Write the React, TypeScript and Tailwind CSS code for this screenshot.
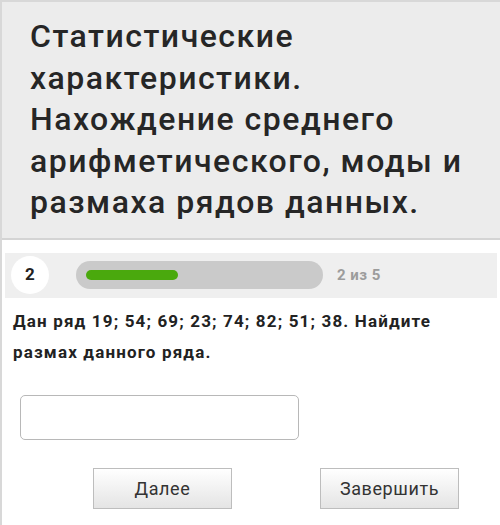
export default function App() {
  return (
    <div
      className="w-[500px] h-[525px] bg-white border-t-2 border-l-2 border-[#d8d8d8] overflow-hidden text-[#222]"
      style={{ fontFamily: 'Roboto, "Noto Sans", sans-serif' }}
    >
      {/* Title */}
      <div className="bg-[#ececec] border-b-2 border-[#d4d4d4] pl-[28px] pt-[14px] pb-[14px]">
        <h1 className="text-[32px] leading-[41.5px] font-medium tracking-[1.5px] text-[#262626]">
          Статистические
          <br />
          характеристики.
          <br />
          Нахождение среднего
          <br />
          арифметического, моды и
          <br />
          размаха рядов данных.
        </h1>
      </div>

      {/* Progress */}
      <div className="mt-[13px] ml-[3px] mr-[3px] h-[45px] bg-[#efefef] flex items-center">
        <div className="ml-[6px] w-[38px] h-[38px] rounded-full bg-white flex items-center justify-center text-[17px] font-bold">
          2
        </div>
        <div className="ml-[27px] w-[247px] h-[28px] rounded-full bg-[#cacaca] flex items-center pl-[10px]">
          <div className="w-[92px] h-[10px] rounded-full bg-[#4aa90d]" />
        </div>
        <span className="ml-[14px] text-[15px] font-bold tracking-[0.5px] text-[#9c9c9c]">2 из 5</span>
      </div>

      {/* Question */}
      <p className="mt-[8px] pl-[11px] pr-[40px] text-[17px] leading-[31px] font-bold tracking-[1.15px] text-[#222]">
        Дан ряд 19; 54; 69; 23; 74; 82; 51; 38. Найдите размах данного ряда.
      </p>

      <input
        type="text"
        className="block mt-[27px] ml-[18px] w-[279px] h-[45px] border border-[#b8b8b8] rounded-[5px] bg-white outline-none px-2"
      />

      <div className="mt-[28px] flex pl-[91px] gap-[88px]">
        <button className="w-[139px] h-[41px] border border-[#bdbdbd] bg-gradient-to-b from-white to-[#e4e4e4] text-[18px] tracking-[0.6px] text-[#333]">
          Далее
        </button>
        <button className="w-[139px] h-[41px] border border-[#bdbdbd] bg-gradient-to-b from-white to-[#e4e4e4] text-[18px] tracking-[0.6px] text-[#333]">
          Завершить
        </button>
      </div>
    </div>
  );
}
